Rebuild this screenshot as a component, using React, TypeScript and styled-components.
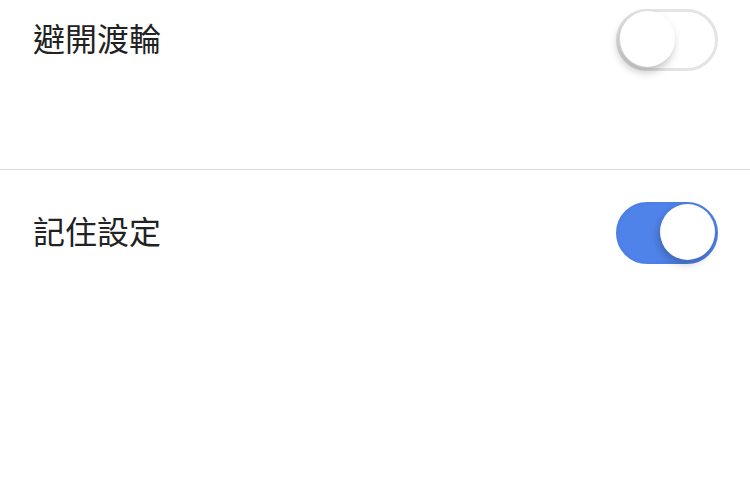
import React, { useState } from "react";
import styled, { createGlobalStyle } from "styled-components";

const GlobalStyle = createGlobalStyle`
  html, body {
    margin: 0;
    padding: 0;
    background: #ffffff;
    overflow: hidden;
  }
  body {
    font-family: "Noto Sans CJK TC", "Noto Sans", sans-serif;
  }
`;

interface Setting {
	id: string;
	label: string;
	on: boolean;
}

const App: React.FC = () => {
	const [settings, setSettings] = useState<Setting[]>([
		{ id: "ferry", label: "避開渡輪", on: false },
		{ id: "remember", label: "記住設定", on: true },
	]);

	const toggle = (id: string) => {
		setSettings(settings.map((s) => (s.id === id ? { ...s, on: !s.on } : s)));
	};

	return (
		<>
			<GlobalStyle />
			<List>
				{settings.map((s) => (
					<Row key={s.id}>
						<Label>{s.label}</Label>
						<Switch $on={s.on} onClick={() => toggle(s.id)} aria-pressed={s.on}>
							<Knob $on={s.on} />
						</Switch>
					</Row>
				))}
			</List>
		</>
	);
};

const List = styled.ul`
  list-style: none;
  margin: -23px 0 0;
  padding: 0;
`;

const Row = styled.li`
  display: flex;
  align-items: center;
  justify-content: space-between;
  padding: 32px 32px 98px 33px;
  border-bottom: 1px solid #dcdcdc;

  &:last-child {
    border-bottom: none;
  }
`;

const Label = styled.span`
  font-size: 32px;
  line-height: 44px;
  padding-bottom: 6px;
  color: #222222;
`;

const Switch = styled.button<{ $on: boolean }>`
  position: relative;
  box-sizing: border-box;
  width: 102px;
  height: 62px;
  padding: 0;
  border-radius: 31px;
  cursor: pointer;
  outline: none;
  border: 3px solid ${({ $on }) => ($on ? "#4e7fe6" : "#e4e4e4")};
  background: ${({ $on }) => ($on ? "#5083ea" : "#ffffff")};
`;

const Knob = styled.span<{ $on: boolean }>`
  position: absolute;
  top: -1px;
  left: ${({ $on }) => ($on ? "41px" : "1px")};
  width: 55px;
  height: 56px;
  border-radius: 50%;
  background: #ffffff;
  box-shadow: ${({ $on }) =>
		$on
			? "-2px 4px 8px rgba(0, 0, 0, 0.22)"
			: "-2px 5px 9px rgba(0, 0, 0, 0.25)"};
`;

export default App;
